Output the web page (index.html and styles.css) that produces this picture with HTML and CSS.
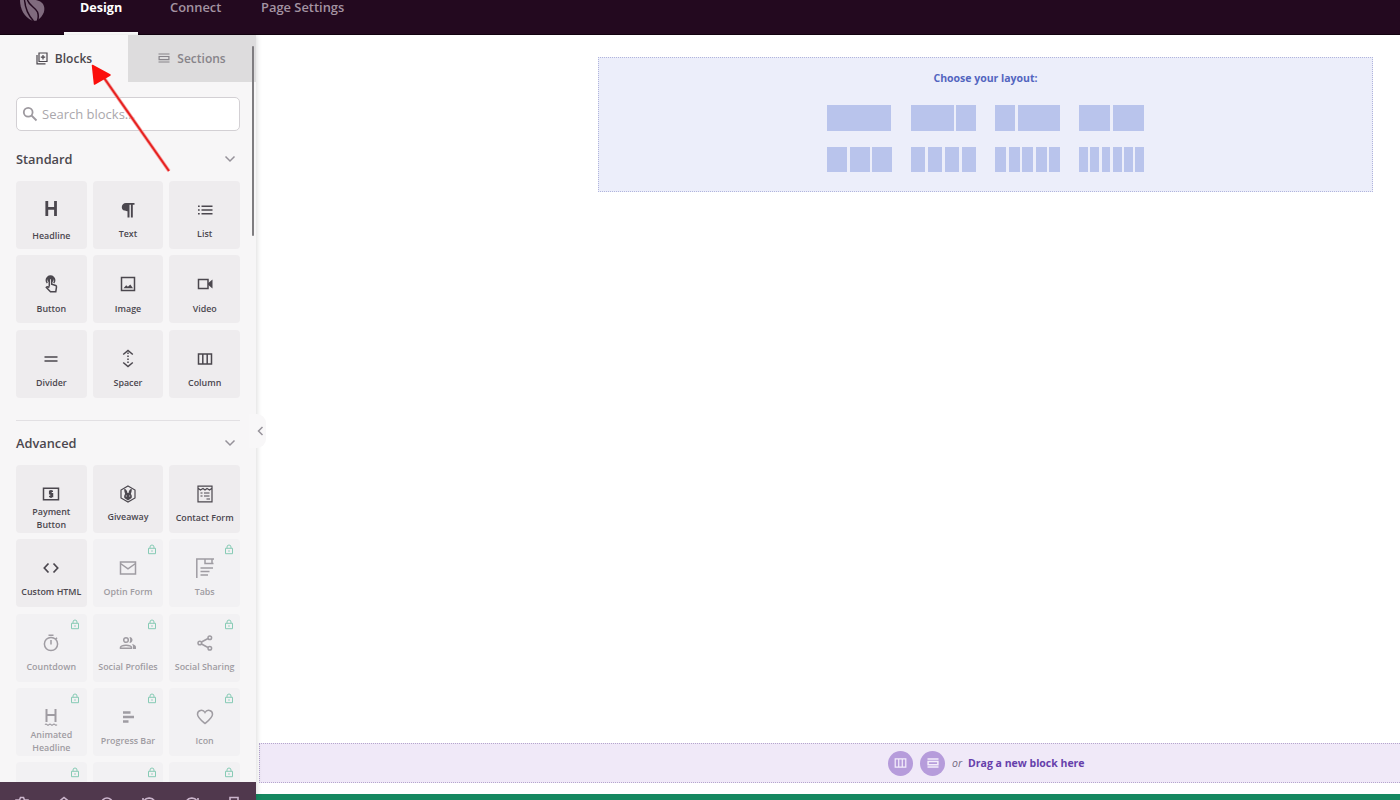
FILE: index.html
```html
<!DOCTYPE html>
<html lang="en">
<head>
<meta charset="utf-8">
<title>Page Builder</title>
<link rel="stylesheet" href="styles.css">
</head>
<body>
<svg class="defs" aria-hidden="true">
  <symbol id="lock" viewBox="0 0 10 11"><path d="M1.5 4.3h7v5.4h-7zM3 4.2V3a2 2 0 0 1 4 0v1.2M5 6.2v1.6"/></symbol>
  <symbol id="chev" viewBox="0 0 12 8"><path d="M1.5 1.5 6 6l4.500-4.500"/></symbol>
  <symbol id="cols" viewBox="0 0 16 12"><path d="M1.500 1h13v10h-13zM5.800 1v10M10.200 1v10"/></symbol>
  <symbol id="rows" viewBox="0 0 12 10"><path d="M.5 1h11M1.100 3.500h9.800v3.200H1.100zM.5 9h11"/></symbol>
</svg>
<div class="app">
  <header class="topbar">
    <div class="logo">
      <svg width="28" height="22" viewBox="0 0 28 22"><path d="M1 0C1 9 5 17 13 20.500Q16 21 18 20.500C25 16 27 9 24 4Q22 1 17 0Z"/><path class="cut" d="M5.500-1C6 8 9 15 14.500 21M8-1C10 6 16 7 18.500 12Q20 16 18.500 21"/><path class="vein" d="M7 0C8 8 11 13 15 18"/></svg>
    </div>
    <nav class="nav">
      <a class="nav-item nav-active">Design</a>
      <a class="nav-item nav-connect">Connect</a>
      <a class="nav-item">Page Settings</a>
    </nav>
  </header>
  <div class="main">
    <aside class="sidebar">
      <div class="tabs">
        <div class="tab"><svg width="12" height="13" viewBox="0 0 12 13"><path d="M3 1h8v8.500H3zM1 3v8.800h8.500M7 3v4.500M4.800 5.200h4.400"/></svg><span>Blocks</span></div>
        <div class="tab tab-off"><svg width="12" height="10"><use href="#rows"/></svg><span>Sections</span></div>
      </div>
      <div class="panel">
        <div class="search"><svg width="16" height="16" viewBox="0 0 16 16"><circle cx="6.200" cy="6.200" r="4.400"/><path d="m9.500 9.500 5 5"/></svg><span>Search blocks...</span></div>
        <div class="group-head"><span>Standard</span><svg class="chev" width="12" height="8"><use href="#chev"/></svg></div>
        <div class="grid">
          <div class="tile low"><div class="icon"><svg width="14" height="18" viewBox="0 0 14 18"><path class="h-mark" d="M2.800 1v15M11.500 1v15M2.800 8.400h8.700"/></svg></div><span>Headline</span></div>
          <div class="tile"><div class="icon"><svg width="14" height="16" viewBox="0 0 14 16"><path class="solid" d="M5 1h8.500v1.800h-1.700V15.500H9.900V2.800H8.500V15.500H6.500V9.300C2.500 9.300.8 7.500.8 5.100S2.500 1 5 1Z"/></svg></div><span>Text</span></div>
          <div class="tile"><div class="icon"><svg width="16" height="12" viewBox="0 0 16 12"><path d="M4.500 2.200H15.500M4.500 6H15.500M4.500 9.800H15.500M1 2.200h1.700M1 6h1.700M1 9.800h1.700"/></svg></div><span>List</span></div>
          <div class="tile"><div class="icon"><svg width="14" height="18" viewBox="0 0 14 18"><path d="M5.300 11.500V4.500a1.200 1.200 0 0 1 2.400 0v4.700l4 1.300q1 .5.800 1.500l-.7 4.700H6.500L2.300 12.500q.6-1 2-.5l1 .7M3.300 8a4.200 4.200 0 1 1 6.400 0M4.700 6.200a2.400 2.400 0 1 1 3.600 0"/></svg></div><span>Button</span></div>
          <div class="tile"><div class="icon"><svg width="16" height="16" viewBox="0 0 16 16"><path d="M1.500 1.500h13v13h-13z"/><path class="solid" d="m3.500 12.300 2.700-3 1.700 1.500L10.300 8.500 13 12.300Z"/></svg></div><span>Image</span></div>
          <div class="tile"><div class="icon"><svg width="16" height="12" viewBox="0 0 16 12"><path d="M1.500 1.500h9.500v9H1.500z"/><path class="solid" d="m11 5.200 4.500-3.600v8.800L11 6.800Z"/></svg></div><span>Video</span></div>
          <div class="tile"><div class="icon"><svg width="14" height="8" viewBox="0 0 14 8"><path d="M.5 2h13M.5 6h13"/></svg></div><span>Divider</span></div>
          <div class="tile"><div class="icon"><svg width="12" height="19" viewBox="0 0 12 19"><path d="m1.200 5.500 4.800-4 4.800 4M1.200 13.500l4.800 4 4.800-4M6 3.500v1.600M6 6.500v1.600M6 9.500v1.600M6 12.500v1.600"/></svg></div><span>Spacer</span></div>
          <div class="tile"><div class="icon"><svg width="16" height="12"><use href="#cols"/></svg></div><span>Column</span></div>
        </div>
        <div class="group-head group-next"><span>Advanced</span><svg class="chev" width="12" height="8"><use href="#chev"/></svg></div>
        <div class="grid">
          <div class="tile two"><div class="icon"><svg width="18" height="14" viewBox="0 0 18 14"><path d="M1.500 1.200h15v11.600h-15zM11 4.300H7.700v2.500h2.800v2.600H7M9 3v8"/></svg></div><span>Payment Button</span></div>
          <div class="tile high"><div class="icon"><svg width="18" height="18" viewBox="0 0 18 18"><path class="thin" d="m9 1 7 4v8l-7 4-7-4V5z"/><path class="solid" d="M5.300 3.800c2 .3 2.900 2.200 3.200 4.200h1c.3-2 1.200-3.900 3.200-4.200.3 2-.5 4.200-.9 5.200 1 1 1.300 2 .8 4L9 15.500l-3.600-2.500c-.5-2-.2-3 .8-4-.4-1-1.200-3.200-.9-5.200Z"/><path class="eye" d="M7.300 10.500v1M10.700 10.500v1"/></svg></div><span>Giveaway</span></div>
          <div class="tile"><div class="icon"><svg width="16" height="18" viewBox="0 0 16 18"><path class="thin" d="M1 1.200h14v15.600H1zM1 3.200l2.500 1.800L6 3.500 8 5l2-1.500L12.500 5 15 3.200M3.500 8h2M7 8h5.500M3.500 11h2M7 11h5.500M9.500 14H13"/></svg></div><span>Contact Form</span></div>
          <div class="tile"><div class="icon"><svg width="16" height="12" viewBox="0 0 16 12"><path class="code" d="M5.500 1.500 1.300 6l4.200 4.500M10.500 1.500 14.700 6l-4.200 4.500"/></svg></div><span>Custom HTML</span></div>
          <div class="tile locked"><svg class="lock"><use href="#lock"/></svg><div class="icon"><svg width="18" height="14" viewBox="0 0 18 14"><path d="M1.500 1h15v12h-15zM1.500 2.500 9 7.800l7.500-5.300"/></svg></div><span>Optin Form</span></div>
          <div class="tile locked"><svg class="lock"><use href="#lock"/></svg><div class="icon"><svg width="20" height="20" viewBox="0 0 20 20"><path d="M1.800 20V1H19M10 1v4.500h8.500M17 1v4.500M5.500 10H18M5.500 13.500h9M5.500 17H13"/></svg></div><span>Tabs</span></div>
          <div class="tile locked"><svg class="lock"><use href="#lock"/></svg><div class="icon"><svg width="16" height="18" viewBox="0 0 16 18"><circle cx="8" cy="10" r="6.600"/><path d="M5.500 1.200h5M8 6v4.500M12.500 5.300 14 3.800"/></svg></div><span>Countdown</span></div>
          <div class="tile locked"><svg class="lock"><use href="#lock"/></svg><div class="icon"><svg width="18" height="14" viewBox="0 0 18 14"><circle cx="7" cy="4" r="2.300"/><path d="M1.500 12.300v-1c1-2.700 10-2.700 11 0v1z"/><path class="solid" d="M10.500 1c4 0 4 6 0 6q1.500-3 0-6ZM13 8c2.500.5 4 1.600 4 3v2h-3v-2q0-1.800-1-3Z"/></svg></div><span>Social Profiles</span></div>
          <div class="tile locked"><svg class="lock"><use href="#lock"/></svg><div class="icon"><svg width="16" height="16" viewBox="0 0 16 16"><circle cx="2.800" cy="8" r="1.800"/><circle cx="12.800" cy="2.700" r="1.800"/><circle cx="12.800" cy="13.300" r="1.800"/><path d="m4.500 7 6.500-3.500M4.500 9l6.500 3.500"/></svg></div><span>Social Sharing</span></div>
          <div class="tile two locked"><svg class="lock"><use href="#lock"/></svg><div class="icon"><svg width="14" height="18" viewBox="0 0 14 18"><path class="bold" d="M2.500 1v13M11.500 1v13M2.500 7h9"/><path class="thin" d="M1 16.700q1-1.200 2 0t2 0 2 0 2 0 2 0 2 0"/></svg></div><span>Animated Headline</span></div>
          <div class="tile locked"><svg class="lock"><use href="#lock"/></svg><div class="icon"><svg width="14" height="14" viewBox="0 0 14 14"><path class="bar" d="M2 2.500h7.500M2 7h11M2 11.500h5.500"/></svg></div><span>Progress Bar</span></div>
          <div class="tile locked"><svg class="lock"><use href="#lock"/></svg><div class="icon"><svg width="18" height="16" viewBox="0 0 18 16"><path d="M9 14.500C5.500 11.500 1.500 8.500 1.500 5.200 1.500 1 7 0 9 3.500 11 0 16.500 1 16.500 5.200c0 3.300-4 6.300-7.500 9.300Z"/></svg></div><span>Icon</span></div>
          <div class="tile locked"><svg class="lock"><use href="#lock"/></svg></div>
          <div class="tile locked"><svg class="lock"><use href="#lock"/></svg></div>
          <div class="tile locked"><svg class="lock"><use href="#lock"/></svg></div>
        </div>
      </div>
      <footer class="tools">
        <svg viewBox="0 0 14 14"><path d="M1 4h3.500L5.500 1.500h3l1 2.500H13L13 7l-1 5H2L1 7z"/></svg>
        <svg viewBox="0 0 14 14"><path d="M2 5.500 7 1.500l5 4M2 9l5 4 5-4"/></svg>
        <svg viewBox="0 0 14 14"><circle cx="7" cy="7.500" r="5.500"/></svg>
        <svg viewBox="0 0 14 14"><path d="M1 2v4h4M2 5c2-4 9-4 11 1"/></svg>
        <svg viewBox="0 0 14 14"><path d="M13 2v4H9M12 5C10 1 3 1 1 6"/></svg>
        <svg viewBox="0 0 14 14"><path d="M3 1.500h8v12H3z"/></svg>
      </footer>
      <div class="scrollbar"></div>
      <div class="collapse"><svg width="7" height="10" viewBox="0 0 7 10"><path d="M5.500 1 1.500 5l4 4"/></svg></div>
    </aside>
    <main class="canvas">
      <section class="chooser">
        <h2>Choose your layout:</h2>
        <div class="layouts">
          <div class="layout full"><i></i></div>
          <div class="layout l21"><i></i><i></i></div>
          <div class="layout l12"><i></i><i></i></div>
          <div class="layout"><i></i><i></i></div>
          <div class="layout"><i></i><i></i><i></i></div>
          <div class="layout"><i></i><i></i><i></i><i></i></div>
          <div class="layout"><i></i><i></i><i></i><i></i><i></i></div>
          <div class="layout"><i></i><i></i><i></i><i></i><i></i><i></i></div>
        </div>
      </section>
      <section class="dropzone">
        <div class="round"><svg width="13" height="10"><use href="#cols"/></svg></div>
        <div class="round"><svg width="12" height="10"><use href="#rows"/></svg></div>
        <em>or</em><strong>Drag a new block here</strong>
      </section>
      <div class="status"></div>
    </main>
  </div>
  <svg class="pointer" width="84" height="112" viewBox="0 0 84 112"><path class="glow" d="m12 14 67 96"/><path class="shaft" d="m12 14 67 96"/><path class="head" d="M2.500 4.500 20 14 4.500 23Z"/></svg>
</div>
</body>
</html>
```
FILE: styles.css
```css
* { box-sizing: border-box; }
body { margin: 0; font-family: "Open Sans", sans-serif; color: #4b474e; background: #fff; }
svg { display: block; flex: none; fill: none; stroke: currentColor; stroke-width: 1.5; }
.defs { position: absolute; width: 0; height: 0; }
.app { position: relative; display: flex; flex-direction: column; width: 1400px; height: 800px; overflow: hidden; }

.topbar { display: flex; flex: none; height: 35px; background: #23091f; border-bottom: 1px solid #12020f; }
.logo { width: 64px; height: 34px; padding-left: 19px; overflow: hidden; }
.logo svg { fill: #806b7e; stroke: none; }
.logo .cut { fill: none; stroke: #23091f; stroke-width: 1.5; }
.logo .vein { fill: none; stroke: #806b7e; stroke-width: 1; }
.nav { display: flex; height: 35px; font-size: 12.900px; font-weight: 600; line-height: 15px; color: #a393a2; }
.nav-item { width: 115px; white-space: nowrap; }
.nav-active { width: 74px; margin-right: 32px; padding-left: 16px; color: #fff; border-bottom: 3px solid #fff; font-size: 12.600px; font-weight: 700; line-height: 16px; }
.nav-connect { width: 91px; }

.main { display: flex; flex: 1; min-height: 0; }
.sidebar { position: relative; z-index: 1; display: flex; flex-direction: column; width: 256px; background: #f7f6f7; box-shadow: 1px 0 5px rgba(0, 0, 0, .14); }
.tabs { display: flex; flex: none; height: 47px; }
.tab { display: flex; align-items: center; justify-content: center; gap: 7px; width: 128px; padding-bottom: 1px; font-size: 12px; font-weight: 550; color: #4b474d; }
.tab svg { stroke-width: 1.2; }
.tab-off { background: #dddcdd; color: #87848a; }
.panel { flex: 1; min-height: 0; padding: 15px 16px 0; overflow: hidden; }
.search { display: flex; align-items: center; gap: 4px; height: 34px; padding-left: 5px; border: 1px solid #d3d0d4; border-radius: 5px; background: #fff; font-size: 13px; color: #aaa7ac; }
.search svg { color: #9d999f; stroke-width: 1.8; }
.group-head { display: flex; align-items: center; justify-content: space-between; height: 50px; padding: 6px 4px 0 0; font-size: 12.800px; font-weight: 550; }
.group-next { height: 45px; margin-top: 22px; padding-top: 0; border-top: 1px solid #e2e0e3; }
.chev { color: #96929a; }
.grid { display: grid; grid-template-columns: repeat(3, 1fr); grid-auto-rows: 68px; gap: 6.400px 6px; }
.tile { position: relative; display: flex; flex-direction: column; align-items: center; gap: 5.300px; padding: 17px 2px 0; border-radius: 4px; background: #eeecee; font-size: 8.900px; font-weight: 550; line-height: 13px; text-align: center; }
.tile > span { white-space: nowrap; }
.icon { display: flex; align-items: center; justify-content: center; height: 24px; }
.low { padding-top: 16px; gap: 8px; }
.high { gap: 4px; }
.two { gap: 0; }
.two > span { width: 50px; margin-top: -1px; white-space: normal; }
.locked { background: #f2f1f3; color: #9f9ca2; }
.lock { position: absolute; top: 5px; right: 6.200px; width: 10px; height: 11px; color: #87cbb5; stroke-width: 1; }
.solid { fill: currentColor; stroke: none; }
.thin { stroke-width: 1.2; }
.code { stroke-width: 1.700; }
.bold { stroke-width: 2; }
.bar { stroke-width: 2.400; }
.h-mark { stroke-width: 2.800; }
.eye { stroke: #eeecee; stroke-width: 1; }
.tools { display: flex; align-items: flex-start; justify-content: space-between; flex: none; height: 18px; padding: 14px 15px 0; overflow: hidden; background: #50384d; color: #cbb5cc; }
.tools svg { width: 14px; height: 14px; stroke-width: 1.600; }
.scrollbar { position: absolute; top: 11px; left: 252px; width: 2px; height: 190px; border-radius: 1px; background: #7f7d80; }
.collapse { position: absolute; top: 379px; left: 249px; display: flex; align-items: center; justify-content: center; width: 17px; height: 34px; padding-left: 5px; border-radius: 0 9px 9px 0; background: #f8f7f8; color: #96939a; }

.canvas { display: flex; flex: 1; flex-direction: column; min-width: 0; background: #fff; }
.chooser { width: 775px; height: 135px; margin: 22px 0 0 342px; padding-top: 12px; border: 1px dotted #b1b5dd; background: #eceefa; }
.chooser h2 { margin: 0 0 18px; font-size: 10.500px; line-height: 17px; text-align: center; color: #5365c0; }
.layouts { display: grid; grid-template-columns: repeat(4, 65px); gap: 16px 19px; justify-content: center; }
.layout { display: flex; gap: 2.500px; height: 25.500px; }
.layout i { flex: 1; background: #b9c4ec; }
.full { padding-right: 1px; }
.l21 i:first-child, .l12 i:last-child { flex: none; width: 42.500px; }
.dropzone { display: flex; align-items: center; height: 40px; margin: auto 0 11px 3px; padding-left: 628px; border: 1px dotted #b5a6cd; border-right: 0; background: #f0e9f8; font-size: 10.500px; color: #6640ab; }
.round { display: flex; align-items: center; justify-content: center; width: 25px; height: 25px; margin-right: 7px; border-radius: 50%; background: #b69cdb; color: #f4edfb; }
.dropzone em { margin: 0 6px 0 0; font-size: 10.500px; color: #73687f; }
.status { height: 6px; background: #158860; }

.pointer { position: absolute; z-index: 2; top: 61px; left: 90px; }
.glow { stroke: #f6a3a3; stroke-width: 3.500; }
.shaft { stroke: #e6201f; stroke-width: 2; }
.head { fill: #fb0f0c; stroke: #fb0f0c; stroke-linejoin: round; }
```
